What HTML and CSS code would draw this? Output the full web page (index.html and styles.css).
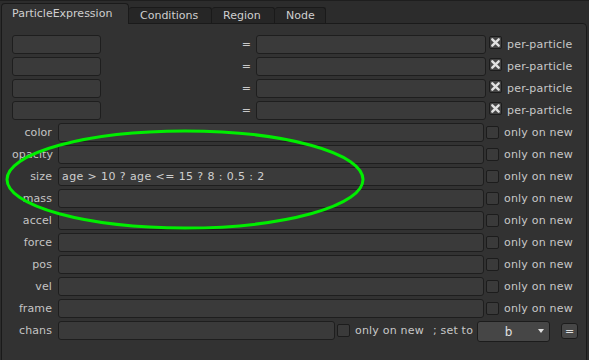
FILE: index.html
```html
<!DOCTYPE html>
<html>
<head>
<meta charset="utf-8">
<link rel="stylesheet" href="styles.css">
</head>
<body>
<div class="app">
  <div class="tabs">
    <div class="tab active">ParticleExpression</div>
    <div class="tab">Conditions</div>
    <div class="tab">Region</div>
    <div class="tab">Node</div>
  </div>
  <div class="panel">
    <div class="rows">
      <div class="row pair">
        <div class="field small"></div>
        <div class="eq">=</div>
        <div class="field wide"></div>
        <span class="check checked"><svg viewBox="0 0 12 12"><path d="M2.5 2.5 L9.5 9.5 M9.5 2.5 L2.5 9.5" stroke="#e0e0e0" stroke-width="2.6" stroke-linecap="round"/></svg></span>
        <span class="ctext">per-particle</span>
      </div>
      <div class="row pair">
        <div class="field small"></div>
        <div class="eq">=</div>
        <div class="field wide"></div>
        <span class="check checked"><svg viewBox="0 0 12 12"><path d="M2.5 2.5 L9.5 9.5 M9.5 2.5 L2.5 9.5" stroke="#e0e0e0" stroke-width="2.6" stroke-linecap="round"/></svg></span>
        <span class="ctext">per-particle</span>
      </div>
      <div class="row pair">
        <div class="field small"></div>
        <div class="eq">=</div>
        <div class="field wide"></div>
        <span class="check checked"><svg viewBox="0 0 12 12"><path d="M2.5 2.5 L9.5 9.5 M9.5 2.5 L2.5 9.5" stroke="#e0e0e0" stroke-width="2.6" stroke-linecap="round"/></svg></span>
        <span class="ctext">per-particle</span>
      </div>
      <div class="row pair">
        <div class="field small"></div>
        <div class="eq">=</div>
        <div class="field wide"></div>
        <span class="check checked"><svg viewBox="0 0 12 12"><path d="M2.5 2.5 L9.5 9.5 M9.5 2.5 L2.5 9.5" stroke="#e0e0e0" stroke-width="2.6" stroke-linecap="round"/></svg></span>
        <span class="ctext">per-particle</span>
      </div>

      <div class="row attr"><span class="label">color</span><div class="field long"></div><span class="check"></span><span class="ctext">only on new</span></div>
      <div class="row attr"><span class="label">opacity</span><div class="field long"></div><span class="check"></span><span class="ctext">only on new</span></div>
      <div class="row attr"><span class="label">size</span><div class="field long">age &gt; 10 ? age &lt;= 15 ? 8 : 0.5 : 2</div><span class="check"></span><span class="ctext">only on new</span></div>
      <div class="row attr"><span class="label">mass</span><div class="field long"></div><span class="check"></span><span class="ctext">only on new</span></div>
      <div class="row attr"><span class="label">accel</span><div class="field long"></div><span class="check"></span><span class="ctext">only on new</span></div>
      <div class="row attr"><span class="label">force</span><div class="field long"></div><span class="check"></span><span class="ctext">only on new</span></div>
      <div class="row attr"><span class="label">pos</span><div class="field long"></div><span class="check"></span><span class="ctext">only on new</span></div>
      <div class="row attr"><span class="label">vel</span><div class="field long"></div><span class="check"></span><span class="ctext">only on new</span></div>
      <div class="row attr"><span class="label">frame</span><div class="field long"></div><span class="check"></span><span class="ctext">only on new</span></div>
      <div class="row attr chans">
        <span class="label">chans</span>
        <div class="field mid"></div>
        <span class="check"></span>
        <span class="ctext">only on new</span>
        <span class="setto">; set to</span>
        <div class="dropdown"><span class="dval">b</span><span class="tri"></span></div>
        <div class="eqbtn">=</div>
      </div>
    </div>
  </div>
  <svg class="ellipse" width="589" height="360" viewBox="0 0 589 360">
    <ellipse cx="185" cy="178.5" rx="178" ry="48.5" fill="none" stroke="#00ee00" stroke-width="3"/>
  </svg>
</div>
</body>
</html>
```
FILE: styles.css
```css
html, body {
  margin: 0;
  padding: 0;
  background: #2c2c2c;
  width: 589px;
  height: 360px;
  overflow: hidden;
}

.app {
  position: relative;
  width: 589px;
  height: 360px;
  font-family: "DejaVu Sans", sans-serif;
  font-size: 11px;
  color: #c8c8c8;
  border-top: 1px solid #1e1e1e;
  box-sizing: border-box;
}

.tabs {
  display: flex;
  align-items: flex-end;
  height: 22px;
  padding-left: 1px;
  padding-top: 2px;
  box-sizing: border-box;
}

.tab {
  height: 16px;
  line-height: 15px;
  padding: 0 11px;
  background: #262626;
  border: 1px solid #1a1a1a;
  border-bottom: none;
  border-left: none;
  border-radius: 3px 3px 0 0;
  color: #cfcfcf;
  box-sizing: border-box;
}

.tab:nth-child(2) { width: 83px; }
.tab:nth-child(3) { width: 63px; }
.tab:nth-child(4) { width: 51px; }

.tab.active {
  width: 128px;
  height: 21px;
  line-height: 19px;
  padding: 0 0 0 10px;
  background: #323232;
  border-left: 1px solid #1a1a1a;
  position: relative;
  margin-bottom: -1px;
  z-index: 1;
  border-radius: 4px 4px 0 0;
}

.panel {
  margin-left: 1px;
  width: 586px;
  height: 340px;
  background: #323232;
  border: 1px solid #1a1a1a;
  border-radius: 0 4px 0 0;
  box-sizing: border-box;
}

.rows {
  display: flex;
  flex-direction: column;
  gap: 3px;
  padding: 11px 0 0 10px;
}

.row {
  display: flex;
  align-items: center;
  height: 19px;
}

.field {
  height: 19px;
  box-sizing: border-box;
  background: #3a3a3a;
  border: 1px solid #1e1e1e;
  border-radius: 3px;
  line-height: 17px;
  padding-left: 3px;
  color: #cfcfcf;
  white-space: nowrap;
  letter-spacing: 0.4px;
}

.field.small { width: 89px; }
.field.wide { width: 230px; }
.field.long { width: 426px; }
.field.mid { width: 277px; }

.eq {
  width: 155px;
  text-align: right;
  padding-right: 5px;
  box-sizing: border-box;
}

.check {
  width: 13px;
  height: 13px;
  box-sizing: border-box;
  background: #3a3a3a;
  border: 1px solid #1c1c1c;
  border-radius: 2px;
  margin-left: 2px;
  margin-right: 5px;
  display: flex;
  align-items: center;
  justify-content: center;
}

.check.checked {
  background: #454545;
}

.pair .check {
  margin-left: 3px;
  margin-top: -4px;
}

.check svg {
  width: 11px;
  height: 11px;
}

.ctext {
  letter-spacing: 0.2px;
}

.pair .ctext {
  margin-left: 0;
}

.label {
  width: 40px;
  text-align: right;
  margin-right: 6px;
  color: #c4c4c4;
  letter-spacing: 0.1px;
}

.chans .check {
  margin-left: 2px;
}

.setto {
  margin-left: 9px;
  margin-right: 4px;
  letter-spacing: 0.2px;
}

.dropdown {
  position: relative;
  width: 73px;
  height: 21px;
  margin-top: 2px;
  box-sizing: border-box;
  background: #464646;
  border: 1px solid #1c1c1c;
  border-radius: 3px;
  display: flex;
  align-items: center;
  justify-content: center;
  color: #e0e0e0;
}

.dval {
  margin-left: -10px;
  font-size: 12px;
}

.tri {
  position: absolute;
  right: 5px;
  top: 7px;
  width: 0;
  height: 0;
  border-left: 3px solid transparent;
  border-right: 3px solid transparent;
  border-top: 4px solid #e0e0e0;
}

.eqbtn {
  margin-left: 11px;
  margin-top: 1px;
  width: 17px;
  height: 16px;
  box-sizing: border-box;
  background: #474747;
  border: 1px solid #1c1c1c;
  border-radius: 3px;
  display: flex;
  align-items: center;
  justify-content: center;
  line-height: 1;
  color: #e0e0e0;
}

.ellipse {
  position: absolute;
  left: 0;
  top: 0;
  pointer-events: none;
}
```
